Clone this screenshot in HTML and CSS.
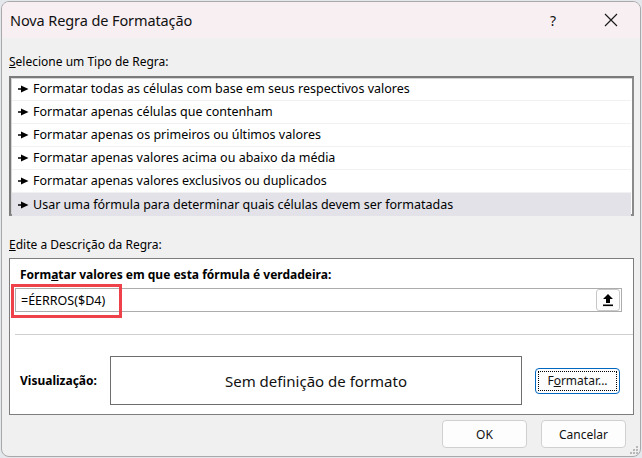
FILE: index.html
```html
<!DOCTYPE html>
<html lang="pt">
<head>
<meta charset="utf-8">
<link rel="stylesheet" href="styles.css">
</head>
<body>
<div class="dialog">
  <div class="titlebar">
    <span class="title">Nova Regra de Formatação</span>
    <span class="tb-help">?</span>
    <svg class="tb-close" width="14" height="14" viewBox="0 0 14 14"><path d="M1 1 L13 13 M13 1 L1 13" stroke="#1a1a1a" stroke-width="1.2" fill="none"/></svg>
  </div>
  <div class="body">
    <div class="label sel-label"><u>S</u>elecione um Tipo de Regra:</div>
    <div class="listbox">
      <div class="item"><svg class="arrow" width="11" height="8" viewBox="0 0 11 8"><path d="M0 4 H4" stroke="#000" stroke-width="1.3"/><path d="M3 0.5 L10.5 4 L3 7.5 Z" fill="#000"/></svg>Formatar todas as células com base em seus respectivos valores</div>
      <div class="item"><svg class="arrow" width="11" height="8" viewBox="0 0 11 8"><path d="M0 4 H4" stroke="#000" stroke-width="1.3"/><path d="M3 0.5 L10.5 4 L3 7.5 Z" fill="#000"/></svg>Formatar apenas células que contenham</div>
      <div class="item"><svg class="arrow" width="11" height="8" viewBox="0 0 11 8"><path d="M0 4 H4" stroke="#000" stroke-width="1.3"/><path d="M3 0.5 L10.5 4 L3 7.5 Z" fill="#000"/></svg>Formatar apenas os primeiros ou últimos valores</div>
      <div class="item"><svg class="arrow" width="11" height="8" viewBox="0 0 11 8"><path d="M0 4 H4" stroke="#000" stroke-width="1.3"/><path d="M3 0.5 L10.5 4 L3 7.5 Z" fill="#000"/></svg>Formatar apenas valores acima ou abaixo da média</div>
      <div class="item"><svg class="arrow" width="11" height="8" viewBox="0 0 11 8"><path d="M0 4 H4" stroke="#000" stroke-width="1.3"/><path d="M3 0.5 L10.5 4 L3 7.5 Z" fill="#000"/></svg>Formatar apenas valores exclusivos ou duplicados</div>
      <div class="item selected"><svg class="arrow" width="11" height="8" viewBox="0 0 11 8"><path d="M0 4 H4" stroke="#000" stroke-width="1.3"/><path d="M3 0.5 L10.5 4 L3 7.5 Z" fill="#000"/></svg>Usar uma fórmula para determinar quais células devem ser formatadas</div>
    </div>
    <div class="label edit-label"><u>E</u>dite a Descrição da Regra:</div>
    <div class="panel">
      <div class="formula-label">Form<u>a</u>tar valores em que esta fórmula é verdadeira:</div>
      <div class="formula-row">
        <div class="input">
          <span class="formula">=ÉERROS($D4)</span>
          <span class="collapse-btn"><svg width="12" height="14" viewBox="0 0 12 14"><path d="M6 1 L11 6 H8 V10 H4 V6 H1 Z" fill="#000"/><rect x="1" y="11.5" width="10" height="1.6" fill="#000"/></svg></span>
        </div>
        <div class="highlight"></div>
      </div>
      <div class="sep"></div>
      <div class="preview-row">
        <span class="preview-label">Visualização:</span>
        <div class="preview">Sem definição de formato</div>
        <button class="btn fmt-btn"><span class="focus">F<u>o</u>rmatar...</span></button>
      </div>
    </div>
    <div class="actions">
      <button class="btn">OK</button>
      <button class="btn">Cancelar</button>
    </div>
  </div>
  <svg class="grip" width="10" height="10" viewBox="0 0 10 10"><g fill="#b8b8b8"><rect x="7" y="1" width="2" height="2"/><rect x="4" y="4" width="2" height="2"/><rect x="7" y="4" width="2" height="2"/><rect x="1" y="7" width="2" height="2"/><rect x="4" y="7" width="2" height="2"/><rect x="7" y="7" width="2" height="2"/></g></svg>
</div>
</body>
</html>
```
FILE: styles.css
```css
html, body {
  margin: 0;
  padding: 0;
}
body {
  background: #e4e8ec;
  padding: 1px 1px 0 1px;
  font-family: "Noto Sans", "Open Sans", sans-serif;
  font-size: 12px;
  color: #000;
}
.dialog {
  position: relative;
  width: 638px;
  height: 454px;
  border: 1px solid #a9a9a9;
  border-radius: 8px;
  background: #f0f0f0;
  overflow: hidden;
}
.titlebar {
  height: 36px;
  background: #f8eff3;
  display: flex;
  align-items: center;
  padding-left: 8px;
}
.title {
  font-size: 14.5px;
  flex: 1;
  color: #111;
  letter-spacing: -0.1px;
}
.tb-help {
  font-size: 14px;
  width: 20px;
  margin-right: 34px;
  color: #111;
}
.tb-close {
  margin-right: 22px;
}
.body {
  padding: 0 6px 0 7px;
}
.label {
  color: #000;
  height: 18px;
  line-height: 18px;
}
.sel-label {
  margin-top: 15px;
  margin-bottom: 5px;
}
.listbox {
  background: #fff;
  border: 2px solid #7b7b7b;
  border-right-color: #8a8a8a;
  border-bottom-color: #8a8a8a;
  height: 136px;
  padding: 0 0 0 1px;
  box-shadow: inset 1px 1px 0 #d5d5d5;
}
.item {
  height: 23px;
  line-height: 22px;
  display: flex;
  align-items: center;
  padding-left: 6px;
  margin-right: 1px;
  border-bottom: 1px solid #f1f1f1;
  box-sizing: border-box;
  font-size: 12.5px;
}
.item.selected {
  background: #e2e2e8;
  border-bottom: none;
}
.arrow {
  margin-right: 4px;
  flex: none;
}
.edit-label {
  margin-top: 20px;
  margin-bottom: 4px;
}
.panel {
  background: #fff;
  border: 1px solid #7d7d7d;
  height: 157px;
  box-sizing: border-box;
  padding: 0 0 0 5px;
}
.formula-label {
  font-weight: bold;
  margin-top: 7px;
  padding-left: 5px;
  height: 18px;
  line-height: 18px;
}
.formula-row {
  position: relative;
  margin-top: 4px;
}
.input {
  width: 605px;
  height: 22px;
  border: 1px solid #acacac;
  display: flex;
  align-items: center;
  justify-content: space-between;
  box-sizing: content-box;
}
.formula {
  padding-left: 5px;
  font-size: 12.5px;
}
.collapse-btn {
  width: 22px;
  height: 20px;
  border: 1px solid #c8c8c8;
  border-radius: 3px;
  margin-right: 1px;
  display: flex;
  align-items: center;
  justify-content: center;
  background: #fdfdfd;
}
.highlight {
  position: absolute;
  left: -4px;
  top: -4px;
  width: 105px;
  height: 28px;
  border: 3px solid #ee4149;
}
.sep {
  height: 1px;
  background: #cfcfcf;
  margin-top: 22px;
}
.preview-row {
  display: flex;
  align-items: center;
  margin-top: 21px;
}
.preview-label {
  font-weight: bold;
  width: 90px;
  padding-left: 5px;
}
.preview {
  width: 410px;
  height: 47px;
  border: 1px solid #6e6e6e;
  display: flex;
  align-items: center;
  justify-content: center;
  font-size: 15px;
  color: #111;
}
.btn {
  font-family: inherit;
  font-size: 12px;
  background: #fdfdfd;
  border: 1px solid #d0d0d0;
  border-radius: 4px;
  color: #111;
  width: 85px;
  height: 28px;
  padding: 0;
}
.fmt-btn {
  margin-left: 13px;
  height: 26px;
  border: 1px solid #0067c0;
  padding: 2px;
  display: flex;
}
.focus {
  flex: 1;
  border: 1px dotted #000;
  display: flex;
  align-items: center;
  justify-content: center;
}
.actions {
  display: flex;
  justify-content: flex-end;
  gap: 14px;
  margin-top: 5px;
  padding-right: 8px;
}
.grip {
  position: absolute;
  right: 1px;
  bottom: 1px;
}
```
